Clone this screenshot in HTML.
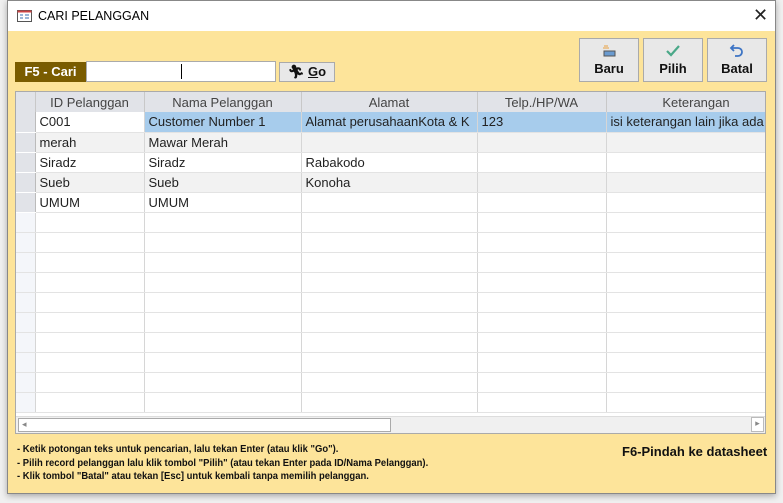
<!DOCTYPE html>
<html><head><style>
*{margin:0;padding:0;box-sizing:border-box}
body{width:783px;height:503px;background:#f0f0f0;position:relative;overflow:hidden;font-family:"Liberation Sans",sans-serif}
.win{position:absolute;left:7px;top:0;width:769px;height:494px;background:#fff;border:1px solid #888;box-shadow:0 2px 6px rgba(0,0,0,.3)}
.title{position:absolute;left:30px;top:8px;font-size:12.5px;color:#000}
.body{position:absolute;left:8px;top:31px;width:767px;height:462px;background:#fde49a}
.abs{position:absolute}
.btn{position:absolute;background:#e8e8e8;border:1px solid #aaa;font-weight:bold;font-size:13px;text-align:center;color:#111}
table{border-collapse:collapse;table-layout:fixed;font-size:13px}
td{height:20px;border-right:1px solid #d6d6d6;border-bottom:1px solid #e3e3e3;padding:0 4px;white-space:nowrap;overflow:hidden;color:#222}
th{height:20px;background:#e1e3e8;font-weight:normal;color:#444;border-right:1px solid #c8c8c8;font-size:13px}
td.sel{background:#e1e3e8;border-right:1px solid #bbb;border-bottom:1px solid #fff}
tr.alt td{background:#f2f2f2}
tr.alt td.sel{background:#e1e3e8}
.hl{background:#a7ccec!important}
</style></head><body>
<div class="win">
<svg class="abs" style="left:9px;top:9px" width="15" height="12"><rect x=".5" y=".5" width="14" height="11" fill="#fff" stroke="#555"/><rect x=".5" y=".5" width="14" height="2" fill="#c44"/><path d="M3 5h3M3 8h3M8 5h4M8 8h4" stroke="#3a6fb0"/></svg>
<div class="title">CARI PELANGGAN</div>
<div class="abs" style="left:745px;top:4px;font-size:18px;color:#222">✕</div>
</div>
<div class="body"></div>
<div class="abs" style="left:15px;top:62px;width:71px;height:20px;background:#7a5c00;color:#fff;font-weight:bold;font-size:13px;line-height:20px;text-align:center">F5 - Cari</div>
<div class="abs" style="left:86px;top:61px;width:190px;height:21px;background:#fff;border:1px solid #aaa"><div class="abs" style="left:94px;top:2px;width:1px;height:15px;background:#000"></div></div>
<div class="btn" style="left:279px;top:62px;width:56px;height:20px;line-height:18px;font-weight:bold">🏃︎ <u>G</u>o</div>
<div class="btn" style="left:579px;top:38px;width:60px;height:44px;padding-top:22px">Baru
<svg class="abs" style="left:21px;top:6px" width="16" height="12"><path d="M3 1h4M2 3h6" stroke="#e8a040"/><rect x="3" y="6" width="11" height="5" fill="#6a9bd0" stroke="#555"/></svg></div>
<div class="btn" style="left:643px;top:38px;width:60px;height:44px;padding-top:22px">Pilih
<svg class="abs" style="left:21px;top:5px" width="16" height="14"><path d="M2 7l4 4 8-9" stroke="#4aa888" stroke-width="2.2" fill="none"/></svg></div>
<div class="btn" style="left:707px;top:38px;width:60px;height:44px;padding-top:22px">Batal
<svg class="abs" style="left:21px;top:4px" width="16" height="15"><path d="M5 2L2 5l3 3M2 5h7a4 4 0 010 8H6" stroke="#3d74c4" stroke-width="1.8" fill="none"/></svg></div>
<div class="abs" style="left:15px;top:91px;width:751px;height:343px;background:#fff;border:1px solid #aaa;overflow:hidden">
<table style="width:770px">
<colgroup><col style="width:19px"><col style="width:109px"><col style="width:157px"><col style="width:176px"><col style="width:129px"><col style="width:180px"></colgroup>
<tr><th style="background:#e1e3e8"></th><th>ID Pelanggan</th><th>Nama Pelanggan</th><th>Alamat</th><th>Telp./HP/WA</th><th>Keterangan</th></tr>
<tr><td class="sel"></td><td>C001</td><td class="hl">Customer Number 1</td><td class="hl">Alamat perusahaanKota &amp; K</td><td class="hl">123</td><td class="hl">isi keterangan lain jika ada</td></tr>
<tr class="alt"><td class="sel"></td><td>merah</td><td>Mawar Merah</td><td></td><td></td><td></td></tr>
<tr><td class="sel"></td><td>Siradz</td><td>Siradz</td><td>Rabakodo</td><td></td><td></td></tr>
<tr class="alt"><td class="sel"></td><td>Sueb</td><td>Sueb</td><td>Konoha</td><td></td><td></td></tr>
<tr><td class="sel"></td><td>UMUM</td><td>UMUM</td><td></td><td></td><td></td></tr>
<tr><td style="background:#f4f6fa"></td><td></td><td></td><td></td><td></td><td></td></tr>
<tr><td style="background:#f4f6fa"></td><td></td><td></td><td></td><td></td><td></td></tr>
<tr><td style="background:#f4f6fa"></td><td></td><td></td><td></td><td></td><td></td></tr>
<tr><td style="background:#f4f6fa"></td><td></td><td></td><td></td><td></td><td></td></tr>
<tr><td style="background:#f4f6fa"></td><td></td><td></td><td></td><td></td><td></td></tr>
<tr><td style="background:#f4f6fa"></td><td></td><td></td><td></td><td></td><td></td></tr>
<tr><td style="background:#f4f6fa"></td><td></td><td></td><td></td><td></td><td></td></tr>
<tr><td style="background:#f4f6fa"></td><td></td><td></td><td></td><td></td><td></td></tr>
<tr><td style="background:#f4f6fa"></td><td></td><td></td><td></td><td></td><td></td></tr>
<tr><td style="background:#f4f6fa"></td><td></td><td></td><td></td><td></td><td></td></tr>
</table>
<div class="abs" style="left:0;top:324px;width:749px;height:17px;background:#f0f0f0;border-top:1px solid #ddd">
<div class="abs" style="left:2px;top:1px;width:373px;height:14px;background:#fff;border:1px solid #aaa"></div>
<div class="abs" style="left:6px;top:2px;font-size:9px;color:#888">◂</div>
<div class="abs" style="left:735px;top:0;width:13px;height:15px;border:1px solid #bbb;background:#fff;font-size:9px;color:#888;text-align:center">▸</div>
</div></div>
<div class="abs" style="left:17px;top:443px;font-size:10.5px;font-weight:bold;line-height:13.5px;color:#111;transform:scaleX(.9);transform-origin:left">- Ketik potongan teks untuk pencarian, lalu tekan Enter (atau klik "Go").<br>- Pilih record pelanggan lalu klik tombol "Pilih" (atau tekan Enter pada ID/Nama Pelanggan).<br>- Klik tombol "Batal" atau tekan [Esc] untuk kembali tanpa memilih pelanggan.</div>
<div class="abs" style="left:622px;top:444px;font-size:13px;font-weight:bold;color:#111">F6-Pindah ke datasheet</div>
</body></html>
